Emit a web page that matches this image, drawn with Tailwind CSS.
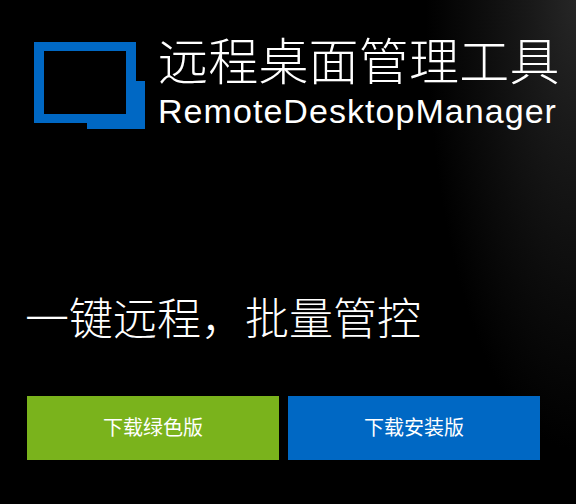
<!DOCTYPE html>
<html lang="zh-CN">
<head>
  <meta charset="UTF-8" />
  <title>RemoteDesktopManager</title>
  <script src="https://cdn.jsdelivr.net/npm/@tailwindcss/browser@4"></script>
</head>
<body class="w-[576px] h-[504px] overflow-hidden bg-black text-white font-['Liberation_Sans','Noto_Sans_CJK_SC',sans-serif]">
  <main class="w-full h-full pt-[34px] pl-[27px] bg-[radial-gradient(ellipse_150px_450px_at_100%_0%,#262626_0%,#191919_30%,#0c0c0c_65%,#000000_100%)]">
    <header class="flex">
      <svg class="ml-[7px] mt-[8px] w-[111px] h-[88px]" viewBox="0 0 111 88">
        <path fill="#0068c4" fill-rule="evenodd" d="M0 0H102V39H111V87H53V81H0ZM10 9V72H92V9Z" />
      </svg>
      <div class="ml-[13px]">
        <h1 class="text-[50px] leading-[58px] tracking-[0.2px] font-light whitespace-nowrap">远程桌面管理工具</h1>
        <p class="text-[34px] leading-[38px] tracking-[1.05px] whitespace-nowrap">RemoteDesktopManager</p>
      </div>
    </header>
    <h2 class="-ml-[2px] mt-[160px] text-[44px] leading-[60px] font-light whitespace-nowrap">一键远程，批量管控</h2>
    <div class="mt-[46px] flex gap-[9px]">
      <a class="w-[252px] h-[64px] flex items-center justify-center bg-[#7ab31c] text-[20px] font-normal">下载绿色版</a>
      <a class="w-[252px] h-[64px] flex items-center justify-center bg-[#0068c4] text-[20px] font-normal">下载安装版</a>
    </div>
  </main>
</body>
</html>
